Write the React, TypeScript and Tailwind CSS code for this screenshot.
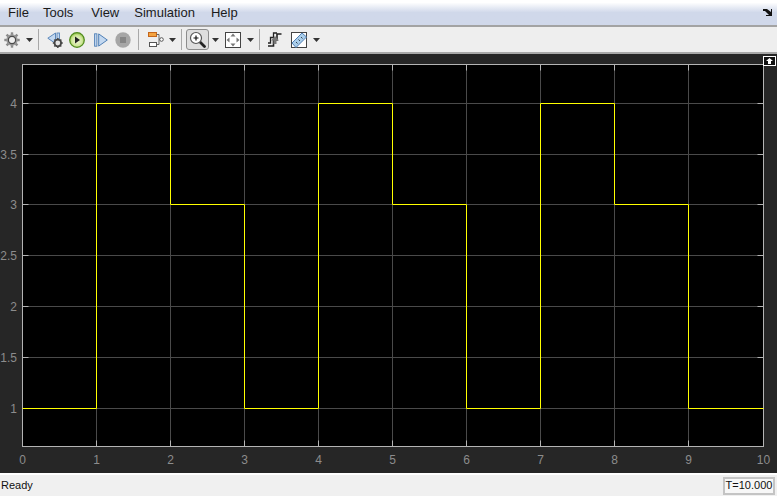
const xTicks = [0, 1, 2, 3, 4, 5, 6, 7, 8, 9, 10];
const yTicks = [1, 1.5, 2, 2.5, 3, 3.5, 4];

// plot box inside the dark panel (panel starts at y=54 of the window)
const left = 22.5;
const right = 763.5;
const top = 10.5;
const bottom = 392.5;
// snapped to half pixels so the 1px lines stay crisp
const xAt = (t: number) => Math.floor(left + t * 74.05) + 0.5;
const yAt = (v: number) => Math.floor(354.5 - (v - 1) * 101.8) + 0.5;

const steps = [1, 4, 3, 1, 4, 3, 1, 4, 3, 1];
const signal = steps
  .map((v, i) => `${i === 0 ? "M" : "L"}${xAt(i)} ${yAt(v)} L${xAt(i + 1)} ${yAt(v)}`)
  .join(" ");

const gearTeeth = [0, 45, 90, 135, 180, 225, 270, 315];

function Caret() {
  return (
    <svg width="7" height="4" viewBox="0 0 7 4">
      <path d="M0 0h7L3.500 4z" fill="#333" />
    </svg>
  );
}

function Sep() {
  return <div className="h-[21px] w-px bg-[#a8a8a8]" />;
}

function Gear() {
  return (
    <svg width="16" height="16" viewBox="0 0 16 16">
      {gearTeeth.map((a) => (
        <rect key={a} x="6.800" y="0.300" width="2.400" height="3" fill="#8a8a8a" transform={`rotate(${a} 8 8)`} />
      ))}
      <circle cx="8" cy="8" r="5.700" fill="#9a9a9a" />
      <circle cx="8" cy="8" r="4.200" fill="#4a4a4a" />
      <circle cx="8" cy="8" r="3" fill="#efefef" />
    </svg>
  );
}

function BackIcon() {
  return (
    <svg width="16" height="16" viewBox="0 0 16 16">
      <path d="M8.500 1v10.500L.8 6.200z" fill="#c3d8f0" stroke="#5b87bb" />
      <rect x="10" y="1" width="2.500" height="6" fill="#c3d8f0" stroke="#5b87bb" strokeWidth="0.900" />
      {gearTeeth.map((a) => (
        <rect key={a} x="10" y="6" width="1.600" height="2" fill="#555" transform={`rotate(${a} 10.800 11)`} />
      ))}
      <circle cx="10.800" cy="11" r="3.300" fill="#e4e4e4" stroke="#444" strokeWidth="1.800" />
    </svg>
  );
}

function PlayIcon() {
  return (
    <svg width="16" height="16" viewBox="0 0 16 16">
      <defs>
        <radialGradient id="playFill" cx="50%" cy="55%" r="55%">
          <stop offset="0%" stopColor="#f2f8dd" />
          <stop offset="65%" stopColor="#cfe69a" />
          <stop offset="100%" stopColor="#8dbf3c" />
        </radialGradient>
      </defs>
      <circle cx="8" cy="8" r="7.300" fill="url(#playFill)" stroke="#4f8a1d" strokeWidth="1.200" />
      <path d="M6 4.600v6.800L11 8z" fill="#222" />
    </svg>
  );
}

function StepIcon() {
  return (
    <svg width="14" height="14" viewBox="0 0 14 14">
      <rect x="0.600" y="0.800" width="2.300" height="12.400" fill="#c3d8f0" stroke="#4f7fb5" strokeWidth="0.900" />
      <path d="M4.700 0.900v12.200L13.300 7z" fill="#c3d8f0" stroke="#4f7fb5" />
    </svg>
  );
}

function StopIcon() {
  return (
    <svg width="16" height="16" viewBox="0 0 16 16">
      <circle cx="8" cy="8" r="7.700" fill="#a6a6a6" />
      <rect x="5" y="5" width="6" height="6" fill="#858585" />
    </svg>
  );
}

function ModelIcon() {
  return (
    <svg width="17" height="16" viewBox="0 0 17 16">
      <rect x="1.500" y="0.500" width="8" height="4" fill="#f4a340" stroke="#c4651a" />
      <rect x="2.500" y="10.500" width="7" height="4" fill="#fff" stroke="#555" />
      <path d="M9.500 2.500H12V12.500H9.500M12 7.500h1" fill="none" stroke="#666" />
      <circle cx="14.500" cy="7.500" r="1.800" fill="#fff" stroke="#555" />
    </svg>
  );
}

function ZoomIcon() {
  return (
    <svg width="17" height="17" viewBox="0 0 17 17">
      <path d="M10.500 10.500l5 5" stroke="#222" strokeWidth="2.800" strokeLinecap="round" />
      <circle cx="7" cy="7" r="5.500" fill="#fff" stroke="#555" strokeWidth="1.200" />
      <path d="M4.500 7h5M7 4.500v5" stroke="#111" strokeWidth="1.200" />
    </svg>
  );
}

function FitIcon() {
  return (
    <svg width="16" height="16" viewBox="0 0 16 16">
      <rect x="0.500" y="0.500" width="15" height="15" fill="#fff" stroke="#444" />
      <path d="M8 1.500l2.500 3h-5zM8 14.500l2.500-3h-5zM1.500 8l3-2.500v5zM14.500 8l-3-2.500v5z" fill="#777" />
    </svg>
  );
}

function CursorIcon() {
  return (
    <svg width="15" height="15" viewBox="0 0 15 15">
      <path d="M1 14H6.500V8H10V2H14.500" fill="none" stroke="#222" strokeWidth="1.600" />
      <path d="M1 11H3.500V5.500H6.500V1H10" fill="none" stroke="#222" strokeWidth="1.300" />
      <path d="M8 4l4 4.500H9.500V12h-3V8.500H4z" fill="#777" />
    </svg>
  );
}

function RulerIcon() {
  return (
    <svg width="18" height="16" viewBox="0 0 18 16">
      <rect x="0.500" y="0.500" width="15" height="15" fill="#fff" stroke="#444" />
      <path d="M1 11L11 1l4.500 4L5 15.500z" fill="#a9cdea" stroke="#4f7fb5" />
      <path d="M5 10l1.500 1.500M7.500 7.500L9 9M10 5l1.500 1.500" stroke="#345" />
    </svg>
  );
}

export default function App() {
  return (
    <div className="flex h-[496px] w-[777px] flex-col overflow-hidden bg-[#f0f0f0] font-['Liberation_Sans',sans-serif]">
      {/* menu bar */}
      <div className="relative flex h-[27px] items-center gap-[14px] border-b-2 border-[#a3a3a3] bg-gradient-to-b from-[#ffffff] from-10% to-[#d0d8ea] to-50% pl-2 pt-px text-[13px] text-[#1b1b1b]">
        <span>File</span>
        <span>Tools</span>
        <span className="ml-[4px]">View</span>
        <span className="ml-px">Simulation</span>
        <span className="ml-[2px]">Help</span>
        <svg className="absolute right-[5px] top-[9px]" width="9" height="7" viewBox="0 0 9 7">
          <path d="M0 0h4l4 3V0h1v7H3V6h3L2 2H0z" fill="#111" />
        </svg>
      </div>

      {/* toolbar */}
      <div className="flex h-[27px] items-center border-b-2 border-[#a8a8a8] bg-[#eeeeee] pl-1">
        <Gear />
        <div className="ml-[6px] flex"><Caret /></div>
        <div className="ml-[5px]"><Sep /></div>
        <div className="ml-[8px]"><BackIcon /></div>
        <div className="ml-[6px]"><PlayIcon /></div>
        <div className="ml-[9px]"><StepIcon /></div>
        <div className="ml-[7px]"><StopIcon /></div>
        <div className="ml-[7px]"><Sep /></div>
        <div className="ml-[8px]"><ModelIcon /></div>
        <div className="ml-[5px]"><Caret /></div>
        <div className="ml-[5px]"><Sep /></div>
        <div className="ml-[4px] flex h-[21px] w-[23px] items-center justify-center rounded-[3px] border border-[#8c8c8c] bg-[#dedede]"><ZoomIcon /></div>
        <div className="ml-[3px]"><Caret /></div>
        <div className="ml-[6px]"><FitIcon /></div>
        <div className="ml-[6px]"><Caret /></div>
        <div className="ml-[5px]"><Sep /></div>
        <div className="ml-[7px]"><CursorIcon /></div>
        <div className="ml-[9px]"><RulerIcon /></div>
        <div className="ml-[4px]"><Caret /></div>
      </div>

      {/* scope panel */}
      <div className="relative flex-1 bg-[#262626]">
        <svg className="block" width="777" height="419" viewBox="0 0 777 419">
          <rect x={left} y={top} width={right - left} height={bottom - top} fill="#000" />
          {xTicks.slice(1, -1).map((t) => (
            <g key={t}>
              <line x1={xAt(t)} y1={top} x2={xAt(t)} y2={bottom} stroke="#4a4a4a" />
              <line x1={xAt(t)} y1={top} x2={xAt(t)} y2={top + 6} stroke="#b4b4b4" />
              <line x1={xAt(t)} y1={bottom - 6} x2={xAt(t)} y2={bottom} stroke="#b4b4b4" />
            </g>
          ))}
          {yTicks.map((v) => (
            <g key={v}>
              <line x1={left} y1={yAt(v)} x2={right} y2={yAt(v)} stroke="#4a4a4a" />
              <line x1={left} y1={yAt(v)} x2={left + 6} y2={yAt(v)} stroke="#b4b4b4" />
              <line x1={right - 6} y1={yAt(v)} x2={right} y2={yAt(v)} stroke="#b4b4b4" />
            </g>
          ))}
          <rect x={left} y={top} width={right - left} height={bottom - top} fill="none" stroke="#b4b4b4" />
          <path d={signal} fill="none" stroke="#ffff00" />
          {xTicks.map((t) => (
            <text key={t} x={xAt(t)} y={410} textAnchor="middle" fill="#8c8c8c" fontSize="12" fontFamily="Liberation Sans, sans-serif">
              {t}
            </text>
          ))}
          {yTicks.map((v) => (
            <text key={v} x={17} y={yAt(v) + 4.500} textAnchor="end" fill="#8c8c8c" fontSize="12" fontFamily="Liberation Sans, sans-serif">
              {v}
            </text>
          ))}
        </svg>
        <div className="absolute right-px top-[2px] flex h-[10px] w-[13px] items-center justify-center border border-white bg-[#111]">
          <svg width="7" height="6" viewBox="0 0 7 6">
            <path d="M3.500 0L7 3H5V6H2V3H0z" fill="#fff" />
          </svg>
        </div>
      </div>

      {/* status bar */}
      <div className="flex h-[23px] items-center justify-between border-t-2 border-[#ffffff] bg-[#f0f0f0] pl-px pr-[2px] text-[11px] text-[#111]">
        <span>Ready</span>
        <div className="flex h-[18px] w-[52px] items-center justify-center border-2 border-[#c4c4c4] bg-[#f7f7f7]">T=10.000</div>
      </div>
    </div>
  );
}
